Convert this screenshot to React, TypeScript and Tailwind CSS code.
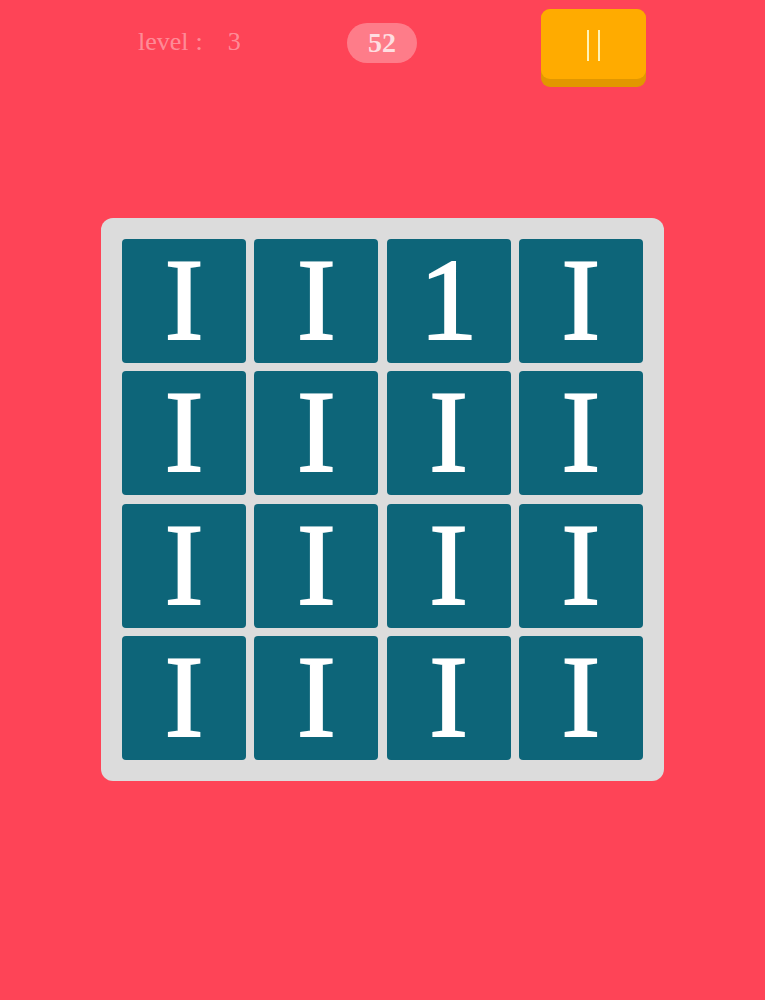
import React from "react";

const tiles = ["I", "I", "1", "I", "I", "I", "I", "I", "I", "I", "I", "I", "I", "I", "I", "I"];

const App: React.FC = () => {
  return (
    <div className="w-[765px] h-[1000px] bg-[#fe4457] font-['Liberation_Serif',serif] overflow-hidden">
      {/* top bar */}
      <div className="flex items-start pt-[9px] pl-[138px]">
        <div className="mt-[16px] w-[209px] flex text-[26px] text-white/40 leading-[34px]">
          <span>level</span>
          <span className="ml-[7px]">:</span>
          <span className="ml-[25px]">3</span>
        </div>
        <div className="mt-[14px] w-[70px] h-[40px] rounded-full bg-white/30 flex items-center justify-center text-[28px] font-bold text-white/75">
          52
        </div>
        <button className="ml-[124px] w-[105px] h-[78px] rounded-[9px] bg-[#e29700] pb-[8px]">
          <div className="h-full rounded-[9px] bg-[#ffab00] flex items-center justify-center gap-[9px] pt-[3px]">
            <span className="w-[2px] h-[31px] bg-[#fff3b8]" />
            <span className="w-[2px] h-[31px] bg-[#fff3b8]" />
          </div>
        </button>
      </div>

      {/* board */}
      <div className="mt-[131px] ml-[101px] w-[563px] h-[563px] rounded-[12px] bg-[#dcdcdc] p-[21px] grid grid-cols-4 gap-[8px]">
        {tiles.map((t, i) => (
          <div
            key={i}
            className="w-[124px] h-[124px] rounded-[4px] bg-[#0d6579] flex items-center justify-center text-white text-[116px] leading-none pb-[2px] [-webkit-text-stroke:2px_white]"
          >
            {t}
          </div>
        ))}
      </div>
    </div>
  );
};

export default App;
